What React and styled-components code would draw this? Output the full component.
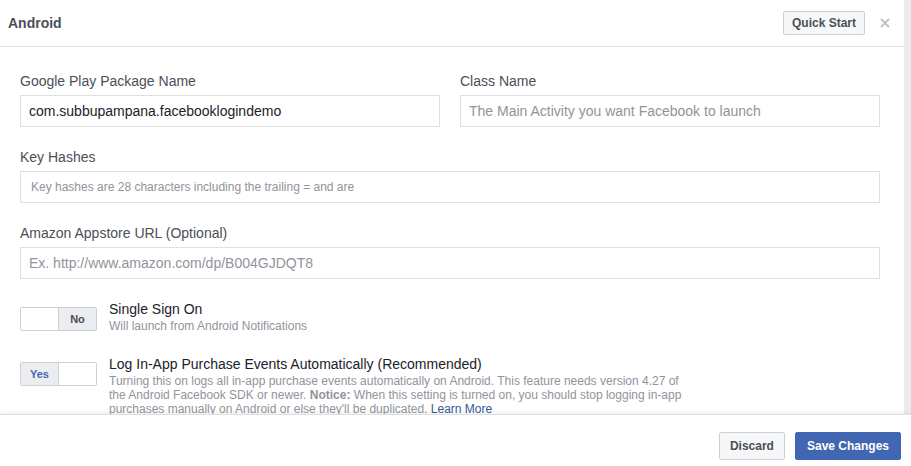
import React from 'react';
import styled, { createGlobalStyle } from 'styled-components';

const GlobalStyle = createGlobalStyle`
  html, body {
    margin: 0;
    padding: 0;
    background: #fff;
    font-family: "Liberation Sans", Arial, Helvetica, sans-serif;
    color: #4b4f56;
  }
  * { box-sizing: border-box; }
`;

const Page = styled.div`
  width: 911px;
  height: 466px;
  display: flex;
  flex-direction: column;
  overflow: hidden;
`;

const Top = styled.div`
  height: 414px;
  display: flex;
  overflow: hidden;
`;

const Dialog = styled.div`
  flex: 1;
  display: flex;
  flex-direction: column;
  min-width: 0;
`;

const Track = styled.div`
  width: 7px;
  background: #e9ebee;
`;

const Header = styled.header`
  height: 47px;
  flex-shrink: 0;
  display: flex;
  align-items: center;
  padding: 0 14px 1px 8px;
  border-bottom: 1px solid #e5e5e5;
`;

const Title = styled.h1`
  flex: 1;
  margin: 0;
  font-size: 14px;
  line-height: 18px;
  font-weight: bold;
  color: #4b4f56;
`;

const Button = styled.button`
  height: ${p => p.$tall ? 28 : 24}px;
  padding: 0 ${p => p.$pad || 8}px;
  border: 1px solid ${p => p.$primary ? '#4267b2' : '#ced0d4'};
  border-radius: 2px;
  background: ${p => p.$primary ? '#4267b2' : '#f6f7f9'};
  color: ${p => p.$primary ? '#fff' : '#4b4f56'};
  font-family: inherit;
  font-size: 12px;
  font-weight: bold;
  line-height: 1;
  cursor: pointer;
`;

const Close = styled.span`
  margin-left: 15px;
  display: flex;
  align-items: center;
`;

const Body = styled.div`
  flex: 1;
  overflow: hidden;
  padding: 25px 24px 0 20px;
  display: flex;
  flex-direction: column;
  gap: 21px;
`;

const Row = styled.div`
  display: grid;
  grid-template-columns: 1fr 1fr;
  gap: 20px;
`;

const Field = styled.div`
  display: flex;
  flex-direction: column;
`;

const Label = styled.label`
  font-size: 14px;
  line-height: 18px;
  margin-bottom: 5px;
  color: #4b4f56;
`;

const Input = styled.input`
  height: 32px;
  width: 100%;
  padding: 0 ${p => p.$small ? 10 : 8}px;
  border: 1px solid #dddfe2;
  border-radius: 0;
  font-family: inherit;
  font-size: ${p => p.$small ? 12 : 14}px;
  color: #1d2129;
  outline: none;
  &::placeholder {
    color: #90949c;
  }
`;

const Settings = styled.div`
  display: flex;
  flex-direction: column;
  gap: 22px;
  margin-top: 0;
`;

const Setting = styled.div`
  display: flex;
  align-items: flex-start;
  gap: 12px;
`;

const Toggle = styled.div`
  margin-top: 7px;
  width: 77px;
  height: 24px;
  flex-shrink: 0;
  display: flex;
  border: 1px solid #ccd0d5;
  border-radius: 2px;
  overflow: hidden;
`;

const Half = styled.span`
  flex: 1;
  display: flex;
  align-items: center;
  justify-content: center;
  font-size: 11px;
  font-weight: bold;
  background: ${p => p.$on ? '#ebedf0' : '#fff'};
  color: ${p => p.$blue ? '#4267b2' : '#4b4f56'};
  & + & {
    border-left: 1px solid #ccd0d5;
  }
`;

const SettingText = styled.div`
  display: flex;
  flex-direction: column;
  max-width: 580px;
`;

const SettingTitle = styled.div`
  font-size: 14px;
  line-height: 18px;
  margin-bottom: 1px;
  color: #1d2129;
`;

const SettingDesc = styled.div`
  font-size: 12px;
  line-height: 14px;
  color: #90949c;
  b { font-weight: bold; }
  a { color: #365899; text-decoration: none; }
`;

const Footer = styled.footer`
  position: relative;
  flex: 1;
  display: flex;
  justify-content: flex-end;
  align-items: flex-start;
  gap: 10px;
  padding: 17px 10px 0 0;
  border-top: 1px solid #dddfe2;
  background: #fff;
  box-shadow: 0 -2px 4px rgba(0, 0, 0, 0.06);
`;

const SwitchSetting = ({ on, title, children }) => (
  <Setting>
    <Toggle>
      {on ? (
        <>
          <Half $on $blue>Yes</Half>
          <Half />
        </>
      ) : (
        <>
          <Half />
          <Half $on>No</Half>
        </>
      )}
    </Toggle>
    <SettingText>
      <SettingTitle>{title}</SettingTitle>
      <SettingDesc>{children}</SettingDesc>
    </SettingText>
  </Setting>
);

export default function App() {
  return (
    <Page>
      <GlobalStyle />
      <Top>
        <Dialog>
          <Header>
            <Title>Android</Title>
            <Button>Quick Start</Button>
            <Close>
              <svg width="10" height="10" viewBox="0 0 10 10">
                <path d="M1 1L9 9M9 1L1 9" stroke="#bec2c9" strokeWidth="1.8" />
              </svg>
            </Close>
          </Header>
          <Body>
            <Row>
              <Field>
                <Label>Google Play Package Name</Label>
                <Input defaultValue="com.subbupampana.facebooklogindemo" />
              </Field>
              <Field>
                <Label>Class Name</Label>
                <Input placeholder="The Main Activity you want Facebook to launch" />
              </Field>
            </Row>
            <Field>
              <Label>Key Hashes</Label>
              <Input $small placeholder="Key hashes are 28 characters including the trailing = and are" />
            </Field>
            <Field>
              <Label>Amazon Appstore URL (Optional)</Label>
              <Input placeholder="Ex. http://www.amazon.com/dp/B004GJDQT8" />
            </Field>
            <Settings>
              <SwitchSetting title="Single Sign On">
                Will launch from Android Notifications
              </SwitchSetting>
              <SwitchSetting on title="Log In-App Purchase Events Automatically (Recommended)">
                Turning this on logs all in-app purchase events automatically on Android. This feature needs version 4.27 of the Android Facebook SDK or newer. <b>Notice:</b> When this setting is turned on, you should stop logging in-app purchases manually on Android or else they'll be duplicated. <a href="#">Learn More</a>
              </SwitchSetting>
            </Settings>
          </Body>
        </Dialog>
        <Track />
      </Top>
      <Footer>
        <Button $tall $pad={10}>Discard</Button>
        <Button $tall $primary $pad={11}>Save Changes</Button>
      </Footer>
    </Page>
  );
}
